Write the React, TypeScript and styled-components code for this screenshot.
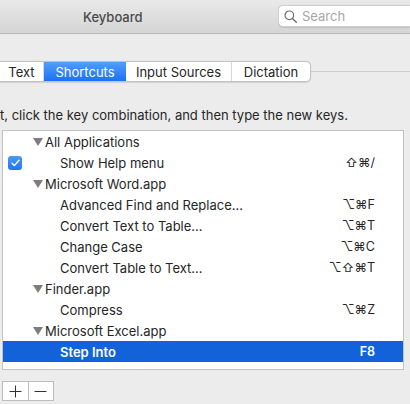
import React from "react";
import styled, { createGlobalStyle } from "styled-components";

const GlobalStyle = createGlobalStyle`
    *, *::before, *::after {
        box-sizing: border-box;
    }
    html, body {
        margin: 0;
        padding: 0;
        background: #ececec;
        overflow: hidden;
    }
    body {
        font-family: Inter, "Noto Sans", "Liberation Sans", sans-serif;
        font-size: 13px;
        color: #262626;
    }
`;

const Window = styled.div`
    width: 410px;
    height: 404px;
    overflow: hidden;
    background: #ececec;
    display: flex;
    flex-direction: column;
`;

const TitleBar = styled.div`
    height: 34px;
    flex-shrink: 0;
    border-bottom: 1px solid #b9b9b9;
    background: linear-gradient(#e9e9e9, #d5d5d5);
    display: flex;
    align-items: center;
`;

const Title = styled.div`
    margin-left: 83px;
    font-size: 13px;
    font-weight: 500;
    color: #4a4a4a;
`;

const SearchField = styled.div`
    margin-left: auto;
    margin-right: -20px;
    margin-top: -1px;
    width: 152px;
    height: 22px;
    background: #fff;
    border: 1px solid #cfcfcf;
    border-radius: 5px;
    display: flex;
    align-items: center;
    gap: 5px;
    padding-left: 5px;
    box-shadow: 0 0.5px 1px rgba(0, 0, 0, 0.1);
    font-size: 13px;
    color: #a6a6a6;
`;

const TabRow = styled.div`
    margin-top: 27px;
    display: flex;
    align-items: center;
`;

const TabGroup = styled.div`
    display: flex;
    height: 21px;
    background: #fff;
    border: 1px solid #c4c4c4;
    border-left: none;
    border-radius: 0 5px 5px 0;
    box-shadow: 0 0.5px 1px rgba(0, 0, 0, 0.12);
`;

const Tab = styled.div<{ active?: boolean; w: number; last?: boolean }>`
    width: ${({ w }) => w}px;
    display: flex;
    align-items: center;
    justify-content: center;
    font-size: 13px;
    color: ${({ active }) => (active ? "#fff" : "#262626")};
    background: ${({ active }) =>
        active ? "linear-gradient(#539dfb, #1a72f5)" : "transparent"};
    border-right: ${({ last, active }) =>
        last || active ? "none" : "1px solid #d6d6d6"};
    border-radius: ${({ last }) => (last ? "0 5px 5px 0" : "0")};
`;

const TabLine = styled.div`
    flex: 1;
    height: 1px;
    background: #cfcfcf;
`;

const Hint = styled.div`
    margin-top: 25px;
    height: 16px;
    line-height: 16px;
    white-space: nowrap;
    font-size: 13px;
    color: #262626;
`;

const ListBox = styled.div`
    margin: 7px 6px 0 2px;
    height: 240px;
    flex-shrink: 0;
    background: #fff;
    border: 1px solid #c2c2c2;
    display: flex;
    flex-direction: column;
`;

const Row = styled.div<{ selected?: boolean }>`
    height: 21px;
    flex-shrink: 0;
    display: flex;
    align-items: center;
    background: ${({ selected }) => (selected ? "#1263d9" : "transparent")};
    color: ${({ selected }) => (selected ? "#fff" : "#262626")};
    font-weight: ${({ selected }) => (selected ? 600 : 400)};
`;

const CheckCell = styled.div`
    width: 30px;
    display: flex;
    align-items: center;
    padding-left: 5px;
`;

const Check = styled.div`
    width: 14px;
    height: 14px;
    border-radius: 3px;
    background: linear-gradient(#4b99fb, #2274f2);
    display: flex;
    align-items: center;
    justify-content: center;
`;

const Triangle = styled.span`
    width: 0;
    height: 0;
    margin-right: 2px;
    border-left: 5px solid transparent;
    border-right: 5px solid transparent;
    border-top: 8px solid #7d7d7d;
`;

const Label = styled.div<{ indent: number }>`
    flex: 1;
    padding-left: ${({ indent }) => indent}px;
    display: flex;
    align-items: center;
    white-space: nowrap;
`;

const Keys = styled.div`
    width: 80px;
    margin-right: 28px;
    text-align: right;
    font-size: 12.5px;
`;

const ButtonGroup = styled.div`
    margin: 11px 0 0 2px;
    display: flex;
    width: 52px;
    height: 20px;
    border: 1px solid #bdbdbd;
    background: #fff;
`;

const SmallButton = styled.div<{ first?: boolean }>`
    flex: 1;
    display: flex;
    align-items: center;
    justify-content: center;
    border-right: ${({ first }) => (first ? "1px solid #bdbdbd" : "none")};
`;

type Item = {
    label: string;
    group?: boolean;
    checked?: boolean;
    keys?: string;
    selected?: boolean;
};

const items: Item[] = [
    { label: "All Applications", group: true },
    { label: "Show Help menu", checked: true, keys: "⇧⌘/" },
    { label: "Microsoft Word.app", group: true },
    { label: "Advanced Find and Replace...", keys: "⌥⌘F" },
    { label: "Convert Text to Table...", keys: "⌥⌘T" },
    { label: "Change Case", keys: "⌥⌘C" },
    { label: "Convert Table to Text...", keys: "⌥⇧⌘T" },
    { label: "Finder.app", group: true },
    { label: "Compress", keys: "⌥⌘Z" },
    { label: "Microsoft Excel.app", group: true },
    { label: "Step Into", keys: "F8", selected: true },
];

const tabs = [
    { name: "Text", w: 44 },
    { name: "Shortcuts", w: 82, active: true },
    { name: "Input Sources", w: 106 },
    { name: "Dictation", w: 78 },
];

export default function App() {
    return (
        <Window>
            <GlobalStyle />
            <TitleBar>
                <Title>Keyboard</Title>
                <SearchField>
                    <svg width="13" height="13" viewBox="0 0 13 13">
                        <circle cx="5.3" cy="5.3" r="4.3" fill="none" stroke="#6e6e6e" strokeWidth="1.2" />
                        <line x1="8.4" y1="8.4" x2="12.3" y2="12.3" stroke="#6e6e6e" strokeWidth="1.4" strokeLinecap="round" />
                    </svg>
                    Search
                </SearchField>
            </TitleBar>

            <TabRow>
                <TabGroup>
                    {tabs.map((t, i) => (
                        <Tab key={t.name} w={t.w} active={t.active} last={i === tabs.length - 1}>
                            {t.name}
                        </Tab>
                    ))}
                </TabGroup>
                <TabLine />
            </TabRow>

            <Hint>t, click the key combination, and then type the new keys.</Hint>

            <ListBox>
                {items.map((it) => (
                    <Row key={it.label} selected={it.selected}>
                        <CheckCell>
                            {it.checked && (
                                <Check>
                                    <svg width="9" height="8" viewBox="0 0 9 8">
                                        <path d="M1 4.2 L3.4 6.6 L8 1.2" fill="none" stroke="#fff" strokeWidth="1.4" strokeLinecap="round" strokeLinejoin="round" />
                                    </svg>
                                </Check>
                            )}
                        </CheckCell>
                        <Label indent={it.group ? 0 : 27}>
                            {it.group && <Triangle />}
                            {it.label}
                        </Label>
                        <Keys>{it.keys}</Keys>
                    </Row>
                ))}
            </ListBox>

            <ButtonGroup>
                <SmallButton first>
                    <svg width="13" height="13" viewBox="0 0 13 13">
                        <path d="M6.5 0.5 V12.5 M0.5 6.5 H12.5" stroke="#333" strokeWidth="1" />
                    </svg>
                </SmallButton>
                <SmallButton>
                    <svg width="13" height="13" viewBox="0 0 13 13">
                        <path d="M0.5 6.5 H12.5" stroke="#333" strokeWidth="1" />
                    </svg>
                </SmallButton>
            </ButtonGroup>
        </Window>
    );
}
